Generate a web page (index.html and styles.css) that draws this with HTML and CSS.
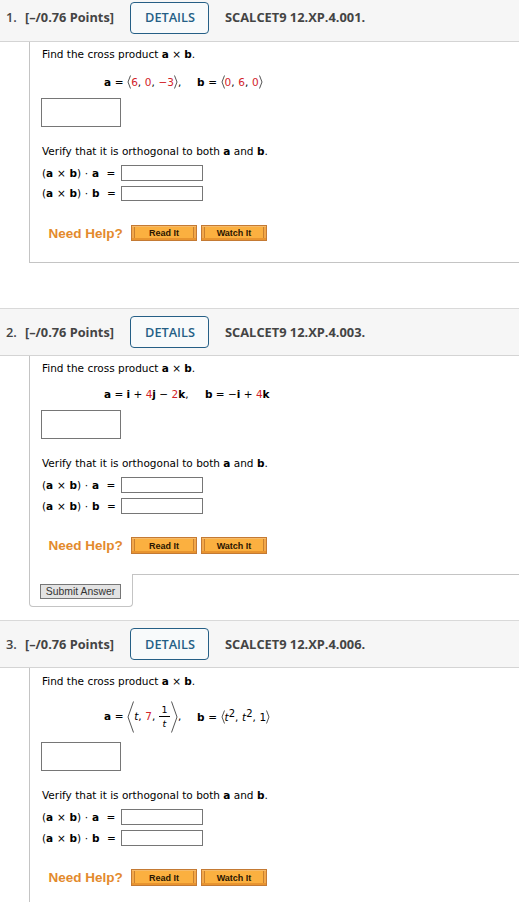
FILE: index.html
```html
<!DOCTYPE html>
<html lang="en">
<head>
<meta charset="UTF-8">
<meta name="viewport" content="width=device-width, initial-scale=1.0">
<title>Cross Product Homework</title>
<link rel="stylesheet" href="styles.css">
</head>
<body>
<section class="question first">
    <div class="header">
        <span class="number">1.</span>
        <span class="points">[–/0.76 Points]</span>
        <button class="details">DETAILS</button>
        <span class="source">SCALCET9 12.XP.4.001.</span>
    </div>
    <div class="content">
        <p class="prompt">Find the cross product <b>a</b> × <b>b</b>.</p>
        <div class="vectors">
            <span class="vec-a"><b>a</b> = <svg class="angle" viewBox="0 0 4 14"><path d="M3.5 .5L1 7l2.5 6.5"/></svg><i class="num">6</i>, <i class="num">0</i>, <i class="num">−3</i><svg class="angle" viewBox="0 0 4 14"><path d="M.5 .5L3 7L.5 13.5"/></svg>,</span>
            <span class="vec-b"><b>b</b> = <svg class="angle" viewBox="0 0 4 14"><path d="M3.5 .5L1 7l2.5 6.5"/></svg><i class="num">0</i>, <i class="num">6</i>, <i class="num">0</i><svg class="angle" viewBox="0 0 4 14"><path d="M.5 .5L3 7L.5 13.5"/></svg></span>
        </div>
        <div class="answer"></div>
        <p class="verify">Verify that it is orthogonal to both <b>a</b> and <b>b</b>.</p>
        <div class="row"><label>(<b>a</b> × <b>b</b>) · <b>a</b> &nbsp;=</label><input type="text"></div>
        <div class="row"><label>(<b>a</b> × <b>b</b>) · <b>b</b> &nbsp;=</label><input type="text"></div>
        <div class="help"><span class="need">Need Help?</span><button>Read It</button><button>Watch It</button></div>
    </div>
</section>

<section class="question second">
    <div class="header">
        <span class="number">2.</span>
        <span class="points">[–/0.76 Points]</span>
        <button class="details">DETAILS</button>
        <span class="source">SCALCET9 12.XP.4.003.</span>
    </div>
    <div class="content">
        <p class="prompt">Find the cross product <b>a</b> × <b>b</b>.</p>
        <div class="vectors">
            <span class="vec-a"><b>a</b> = <b>i</b> + <i class="num">4</i><b>j</b> − <i class="num">2</i><b>k</b>,</span>
            <span class="vec-b"><b>b</b> = −<b>i</b> + <i class="num">4</i><b>k</b></span>
        </div>
        <div class="answer"></div>
        <p class="verify">Verify that it is orthogonal to both <b>a</b> and <b>b</b>.</p>
        <div class="row"><label>(<b>a</b> × <b>b</b>) · <b>a</b> &nbsp;=</label><input type="text"></div>
        <div class="row"><label>(<b>a</b> × <b>b</b>) · <b>b</b> &nbsp;=</label><input type="text"></div>
        <div class="help"><span class="need">Need Help?</span><button>Read It</button><button>Watch It</button></div>
    </div>
    <div class="footer">
        <div class="tab"><button class="submit">Submit Answer</button></div>
        <div class="line"></div>
    </div>
</section>

<section class="question third">
    <div class="header">
        <span class="number">3.</span>
        <span class="points">[–/0.76 Points]</span>
        <button class="details">DETAILS</button>
        <span class="source">SCALCET9 12.XP.4.006.</span>
    </div>
    <div class="content">
        <p class="prompt">Find the cross product <b>a</b> × <b>b</b>.</p>
        <div class="vectors">
            <span class="vec-a"><b>a</b> = <svg class="angle big" viewBox="0 0 7 32"><path d="M6.5 .5L1 16l5.5 15.5"/></svg><em>t</em>, <i class="num">7</i>, <span class="frac"><span>1</span><em>t</em></span><svg class="angle big" viewBox="0 0 7 32"><path d="M.5 .5L6 16L.5 31.5"/></svg>,</span>
            <span class="vec-b"><b>b</b> = <svg class="angle" viewBox="0 0 4 14"><path d="M3.5 .5L1 7l2.5 6.5"/></svg><em>t</em><sup>2</sup>, <em>t</em><sup>2</sup>, 1<svg class="angle" viewBox="0 0 4 14"><path d="M.5 .5L3 7L.5 13.5"/></svg></span>
        </div>
        <div class="answer"></div>
        <p class="verify">Verify that it is orthogonal to both <b>a</b> and <b>b</b>.</p>
        <div class="row"><label>(<b>a</b> × <b>b</b>) · <b>a</b> &nbsp;=</label><input type="text"></div>
        <div class="row"><label>(<b>a</b> × <b>b</b>) · <b>b</b> &nbsp;=</label><input type="text"></div>
        <div class="help"><span class="need">Need Help?</span><button>Read It</button><button>Watch It</button></div>
    </div>
</section>
</body>
</html>
```
FILE: styles.css
```css
* {
    box-sizing: border-box;
}
body {
    margin: 0;
    height: 902px;
    overflow: hidden;
    background-color: #fff;
    color: #000;
    font-family: Verdana, "DejaVu Sans", sans-serif;
    font-size: 10.5px;
}
p {
    margin: 0;
}
.header {
    display: flex;
    align-items: center;
    height: 48px;
    padding-left: 6px;
    border-top: 1px solid #d9d9d9;
    border-bottom: 1px solid #d4d4d4;
    background-color: #f6f6f6;
    color: #444;
    font-family: "Open Sans", sans-serif;
    font-size: 12.85px;
    font-weight: 700;
    white-space: nowrap;
}
.first .header {
    margin-top: -6px;
}
.first .header span,
.first .details {
    padding-bottom: 2px;
}
.number {
    width: 19px;
    font-weight: 600;
}
.points {
    width: 105px;
    font-size: 12.75px;
}
.details {
    width: 79px;
    height: 32px;
    margin-right: 16px;
    padding: 0 0 0 1px;
    border: 1px solid #255f86;
    border-radius: 4px;
    background-color: #f8fafb;
    color: #255f86;
    font: 600 12.75px "Open Sans", sans-serif;
}
.content {
    margin-left: 29px;
    padding: 0 0 20px 12px;
    border-left: 1px solid #c4c4c4;
}
.first .content {
    height: 221px;
    margin-bottom: 45px;
    border-bottom: 1px solid #c4c4c4;
}
.prompt {
    height: 25px;
    line-height: 25px;
}
.third .prompt {
    line-height: 27px;
}
.vectors {
    display: flex;
    align-items: center;
    height: 31px;
    padding: 0 0 2px 62px;
    white-space: nowrap;
}
.second .vectors {
    height: 29px;
    padding-bottom: 3px;
}
.third .vectors {
    height: 49px;
}
.vec-a {
    width: 93px;
}
.second .vec-a {
    width: 101px;
}
.first .vectors,
.third .vectors {
    word-spacing: 0.3px;
}
.num {
    color: #d2232a;
    font-style: normal;
}
.angle {
    width: 4px;
    height: 14px;
    vertical-align: -3px;
    fill: none;
    stroke: #555;
    stroke-width: 1;
}
.angle.big {
    width: 7px;
    height: 32px;
    vertical-align: middle;
}
.frac {
    display: inline-flex;
    flex-direction: column;
    align-items: center;
    width: 11px;
    margin-right: 1px;
    vertical-align: middle;
    font-size: 9.5px;
    line-height: 13px;
}
.frac span {
    width: 100%;
    border-bottom: 1px solid #000;
    text-align: center;
}
sup {
    font-size: 10px;
    line-height: 0;
    vertical-align: 4px;
}
.answer {
    width: 80px;
    height: 29px;
    margin-left: -1px;
    border: 1px solid #767676;
}
.verify {
    height: 20px;
    margin: 15px 0 3px;
    line-height: 18px;
}
.row {
    display: flex;
    align-items: center;
    height: 16px;
    margin-bottom: 5px;
}
.row label {
    width: 79px;
    white-space: nowrap;
    word-spacing: 0.4px;
}
.row input {
    width: 82px;
    height: 16px;
    padding: 0;
    border: 1px solid #767676;
}
.first .row + .row {
    height: 15px;
}
.first .row + .row label {
    padding-bottom: 2px;
}
.first .row + .row input {
    height: 15px;
}
.help {
    display: flex;
    align-items: center;
    height: 17px;
    margin-top: 23px;
    padding-left: 6px;
}
.first .help {
    height: 16px;
    margin-top: 24px;
}
.need {
    width: 83px;
    padding-left: 0.5px;
    color: #e38a2c;
    font: bold 13.5px Arial, "Liberation Sans", sans-serif;
    white-space: nowrap;
}
.help button {
    width: 66px;
    height: 100%;
    margin-right: 4px;
    padding: 0;
    border: 1px solid #c47a34;
    background-color: #fbb040;
    box-shadow: inset 0 1px 0 #f6bb6a, inset 0 -2px 0 #e8942f, inset 2px 0 0 #f2a84a, inset -2px 0 0 #f2a84a, inset 3px 0 0 #c9812f, inset -3px 0 0 #c9812f;
    color: #2b1600;
    font: bold 9px Arial, "Liberation Sans", sans-serif;
}
.footer {
    display: flex;
    height: 46px;
    margin-left: 29px;
}
.tab {
    width: 104px;
    height: 33px;
    padding: 10px 0 0 10px;
    border: 1px solid #c4c4c4;
    border-top: none;
    border-radius: 0 0 4px 4px;
}
.line {
    flex: 1;
    border-top: 1px solid #c4c4c4;
}
.submit {
    width: 81px;
    height: 15px;
    padding: 0;
    border: 1px solid #767676;
    background-color: #e3e3e3;
    color: #333;
    font: 10.4px Arial, "Liberation Sans", sans-serif;
}
```
